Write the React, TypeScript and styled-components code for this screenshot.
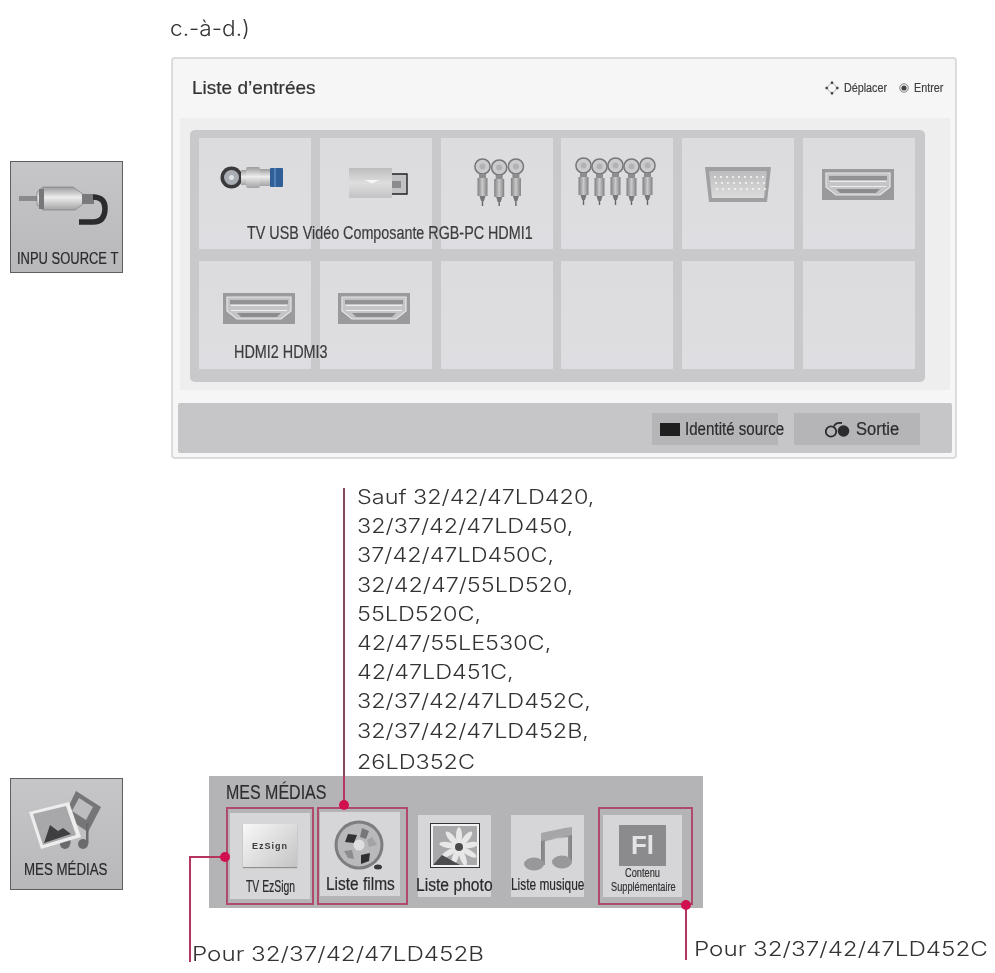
import { FC } from "react";
import styled, { createGlobalStyle } from "styled-components";

const GlobalStyle = createGlobalStyle`
  html, body {
    margin: 0;
    padding: 0;
    background: #ffffff;
  }
`;

const sans = `"Liberation Sans", Arial, sans-serif`;
const light = `Inter, "Noto Sans", sans-serif`;
const pink = "#b5355f";

const Page = styled.div`
  position: relative;
  width: 995px;
  height: 973px;
  overflow: hidden;
  background: #ffffff;
  color: #333333;
  font-family: ${sans};
  filter: blur(0.5px);
`;
// no condensed font on the box, so the TV labels are squeezed to their real width
const Squeezed = styled.span<{ $x: number; $w: number; $size: number }>`
  display: inline-block;
  flex: none;
  width: ${({ $w }) => $w}px;
  font-size: ${({ $size }) => $size}px;
  white-space: nowrap;
  -webkit-text-stroke: 0.2px currentColor;
  transform: scaleX(${({ $x }) => $x});
  transform-origin: left center;
`;
const Widened = styled.div<{ $x: number; $size: number }>`
  font-family: ${light};
  font-weight: 300;
  font-size: ${({ $size }) => $size}px;
  white-space: nowrap;
  color: #333333;
  transform: scaleX(${({ $x }) => $x});
  transform-origin: left center;
`;
const TopNote = styled.div`
  height: 57px;
  padding: 13px 0 0 170px;
  box-sizing: border-box;
  line-height: 30px;
`;
const Row = styled.div`
  display: flex;
  align-items: flex-start;
`;
const Rail = styled.div<{ $top: number }>`
  width: 171px;
  flex: none;
  box-sizing: border-box;
  padding: ${({ $top }) => $top}px 0 0 10px;
`;
const KeyTile = styled.div<{ $top: number; $bottom: number }>`
  width: 113px;
  height: 112px;
  box-sizing: border-box;
  border: 1.5px solid #5f5f61;
  background: linear-gradient(#c6c6c9, #b8b8bb);
  display: flex;
  flex-direction: column;
  align-items: center;
  justify-content: space-between;
  padding: ${({ $top }) => $top}px 0 ${({ $bottom }) => $bottom}px;
`;
const KeyLabel = styled(Squeezed)`
  line-height: 18px;
  color: #2a2a2c;
`;
const Panel = styled.div`
  width: 786px;
  height: 402px;
  box-sizing: border-box;
  border: 2px solid #dcdcdc;
  border-radius: 4px;
  background: #f6f6f7;
  display: flex;
  flex-direction: column;
`;
const PanelHeader = styled.div`
  height: 59px;
  flex: none;
  box-sizing: border-box;
  padding: 0 10px 2px 19px;
  display: flex;
  align-items: center;
  justify-content: space-between;
`;
const PanelTitle = styled(Squeezed)`
  color: #333333;
`;
const Hints = styled.div`
  display: flex;
  align-items: center;
  color: #3f3f41;
`;
const Hint = styled.span<{ $gap?: number; $iconGap: number }>`
  display: inline-flex;
  align-items: center;
  gap: ${({ $iconGap }) => $iconGap}px;
  margin-left: ${({ $gap }) => $gap ?? 0}px;
`;
const Band = styled.div`
  position: relative;
  height: 272px;
  flex: none;
  margin: 0 5px 0 7px;
  padding: 12px 0 0 10px;
  box-sizing: border-box;
  background: #eeeeef;
`;
const Sources = styled.div`
  width: 735px;
  height: 252px;
  box-sizing: border-box;
  padding: 8px 10px 13px 9px;
  background: #c9c9cc;
  border-radius: 5px;
  display: grid;
  grid-template-columns: repeat(6, 1fr);
  grid-template-rows: 111px 108px;
  column-gap: 8.8px;
  row-gap: 12px;
`;
const SourceTile = styled.div<{ $top: number; $left: number }>`
  background: linear-gradient(#dcdcde, #dedee2);
  display: flex;
  align-items: flex-start;
  padding: ${({ $top }) => $top}px 0 0 ${({ $left }) => $left}px;
  box-sizing: border-box;
`;
const SourceLabels = styled(Squeezed)<{ $left: number; $top: number }>`
  position: absolute;
  left: ${({ $left }) => $left}px;
  top: ${({ $top }) => $top}px;
  line-height: 20px;
  color: #3c3c3e;
`;
const ActionBar = styled.div`
  height: 50px;
  flex: none;
  margin: 13px 3px 0 5px;
  padding: 10px 32px 0 0;
  box-sizing: border-box;
  background: #c6c6c9;
  border-radius: 2px;
  display: flex;
  justify-content: flex-end;
  align-items: flex-start;
  gap: 16px;
`;
const ActionButton = styled.div<{ $indent: number; $gap: number }>`
  width: 126px;
  height: 32px;
  box-sizing: border-box;
  padding-left: ${({ $indent }) => $indent}px;
  background: #b5b5b7;
  display: flex;
  align-items: center;
  gap: ${({ $gap }) => $gap}px;
  color: #2c2c2e;
`;
const BlackKey = styled.span`
  width: 20px;
  height: 13px;
  flex: none;
  background: #1f1f20;
`;
const Callout = styled.div`
  display: flow-root;
  height: 288px;
  margin: 29px 0 0 343px;
  padding: 0 0 0 12px;
  border-left: 2px solid #7f4a5e;
`;
const CalloutLines = styled.div`
  margin-top: -5px;
`;
const CalloutLine = styled(Widened)`
  line-height: 29.2px;
  &:last-child {
    margin-top: 2px;
  }
`;
const MediaArea = styled.div`
  position: relative;
  width: 824px;
  height: 197px;
`;
const MediaBar = styled.div`
  width: 494px;
  height: 132px;
  margin-left: 38px;
  box-sizing: border-box;
  padding: 4px 0 0 17px;
  background: #b4b4b6;
`;
const MediaTitle = styled.div`
  height: 27px;
  line-height: 24px;
  color: #2e2e30;
`;
const MediaRow = styled.div`
  display: flex;
  align-items: flex-start;
`;
const MediaSlot = styled.div<{
  $width: number;
  $gap: number;
  $top: number;
  $left: number;
  $right: number;
  $marked?: boolean;
}>`
  width: ${({ $width }) => $width}px;
  height: 98px;
  margin-left: ${({ $gap }) => $gap}px;
  box-sizing: border-box;
  border: 2px solid ${({ $marked }) => ($marked ? "#b04a6c" : "transparent")};
  padding: ${({ $top, $left, $right }) => `${$top}px ${$right}px 0 ${$left}px`};
`;
const MediaTile = styled.div<{ $height: number; $top: number }>`
  height: ${({ $height }) => $height}px;
  box-sizing: border-box;
  padding-top: ${({ $top }) => $top}px;
  background: #d6d6d8;
  display: flex;
  flex-direction: column;
  align-items: center;
  justify-content: space-between;
`;
const MediaLabel = styled(Squeezed)`
  line-height: 20px;
  margin-bottom: 2px;
  color: #2a2a2c;
`;
const SmallLabels = styled.div`
  display: flex;
  flex-direction: column;
  align-items: center;
  margin-bottom: 4px;
`;
const SmallLabel = styled(Squeezed)`
  line-height: 13.5px;
  color: #333333;
`;
const Leader = styled.div<{ $x: number; $y: number; $w: number; $h: number }>`
  position: absolute;
  left: ${({ $x }) => $x}px;
  top: ${({ $y }) => $y}px;
  width: ${({ $w }) => $w}px;
  height: ${({ $h }) => $h}px;
  background: ${pink};
`;
const Pin = styled.div<{ $x: number; $y: number }>`
  position: absolute;
  left: ${({ $x }) => $x - 5}px;
  top: ${({ $y }) => $y - 5}px;
  width: 10px;
  height: 10px;
  border-radius: 50%;
  background: #d0104f;
`;
const FootNote = styled(Widened)<{ $left: number; $top: number }>`
  position: absolute;
  left: ${({ $left }) => $left}px;
  top: ${({ $top }) => $top}px;
  line-height: 26px;
`;
const SignSheet = styled.div`
  width: 54px;
  height: 43px;
  background: linear-gradient(135deg, #f8f8f8, #c4c4c4);
  box-shadow: 0 1px 1px #8f8f8f;
  display: flex;
  align-items: center;
  justify-content: center;
`;
const SignText = styled.span`
  font-size: 9px;
  font-weight: 700;
  letter-spacing: 1px;
  color: #3a3a3a;
`;
const FlashSquare = styled.div`
  width: 47px;
  height: 41px;
  background: #8b8b8d;
  display: flex;
  align-items: center;
  justify-content: center;
  font-weight: 700;
  font-size: 26px;
  color: #e4e4e6;
`;

const Defs: FC = () => (
  <svg width="0" height="0" style={{ position: "absolute" }}>
    <defs>
      <linearGradient id="metal" x1="0" y1="0" x2="0" y2="1">
        <stop offset="0" stopColor="#9b9b9d" />
        <stop offset="0.45" stopColor="#ededed" />
        <stop offset="1" stopColor="#a3a3a5" />
      </linearGradient>
      <linearGradient id="usb" x1="0" y1="0" x2="0" y2="1">
        <stop offset="0" stopColor="#bdbdbf" />
        <stop offset="0.5" stopColor="#dedede" />
        <stop offset="1" stopColor="#c3c3c5" />
      </linearGradient>
      <linearGradient id="metalH" x1="0" y1="0" x2="1" y2="0">
        <stop offset="0" stopColor="#808083" />
        <stop offset="0.5" stopColor="#c9c9c9" />
        <stop offset="1" stopColor="#808083" />
      </linearGradient>
      <linearGradient id="vga" x1="0" y1="0" x2="0" y2="1">
        <stop offset="0" stopColor="#bcbcbe" />
        <stop offset="1" stopColor="#dcdcdd" />
      </linearGradient>
    </defs>
  </svg>
);

const CoaxIcon: FC = () => (
  <svg width="64" height="25" viewBox="0 0 64 25">
    <circle cx="11.5" cy="12.5" r="11" fill="#3a3a3c" />
    <circle cx="11.5" cy="12.5" r="7.5" fill="#a9aeb4" />
    <circle cx="11.5" cy="12.5" r="2.5" fill="#dfe3e6" />
    <rect x="21" y="5" width="7" height="15" fill="url(#metal)" />
    <rect x="26" y="2" width="14" height="21" rx="2" fill="url(#metal)" />
    <rect x="40" y="4" width="10" height="17" fill="url(#metal)" />
    <rect x="50" y="3" width="13" height="19" rx="1" fill="#2f5f96" />
    <rect x="54" y="3" width="2" height="19" fill="#4f7fb4" />
  </svg>
);

const UsbIcon: FC = () => (
  <svg width="60" height="30" viewBox="0 0 60 30">
    <rect x="0" y="0" width="43" height="30" fill="url(#usb)" />
    <path d="M16 12h14l-7 3.5z" fill="#f7f7f7" />
    <path d="M43 6h15v20H43" fill="#c2c2c4" stroke="#222222" strokeWidth="1.4" />
    <rect x="43" y="13" width="9" height="7" fill="#8b8b8d" />
  </svg>
);

const RcaPlugs: FC<{ count: number; pitch: number; width: number }> = ({ count, pitch, width }) => (
  <svg width={width} height="48" viewBox={`0 0 ${width} 48`}>
    {Array.from({ length: count }, (_, i) => (
      <g key={i} transform={`translate(${i * pitch} ${i % 2 ? 1 : 0})`}>
        <circle cx="8.5" cy="8.5" r="7.6" fill="#cbcbcd" stroke="#77777a" strokeWidth="1.5" />
        <circle cx="8.5" cy="8.5" r="3" fill="#b2b2b4" />
        <rect x="5" y="16" width="7" height="7" fill="#8d8d8f" />
        <rect x="3.5" y="20" width="10" height="18" fill="url(#metalH)" />
        <path d="M5.5 38h6l-1.5 5h-3z" fill="#77777a" />
        <rect x="7.8" y="43" width="1.4" height="5" fill="#666668" />
      </g>
    ))}
  </svg>
);

const VgaIcon: FC = () => (
  <svg width="66" height="35" viewBox="0 0 66 35">
    <path d="M0 0h66l-4 35H4z" fill="#a0a0a2" />
    <path d="M4 4h58l-3 27H7z" fill="url(#vga)" />
    {[0, 1, 2].map((r) =>
      Array.from({ length: 9 }, (_, c) => (
        <circle key={`${r}-${c}`} cx={10 + c * 6 + r} cy={10 + r * 6} r="1.1" fill="#f4f4f4" />
      ))
    )}
  </svg>
);

const HdmiIcon: FC = () => (
  <svg width="72" height="31" viewBox="0 0 72 31">
    <rect width="72" height="31" fill="#9a9a9c" />
    <path d="M4 4h64v14l-10 8H14L4 18z" fill="#c4c4c6" stroke="#e6e6e6" strokeWidth="1.2" />
    <rect x="7" y="7" width="58" height="4" fill="#929294" />
    <rect x="8" y="12" width="56" height="1" fill="#eeeeee" />
    <rect x="8" y="17" width="56" height="1" fill="#eeeeee" />
    <path d="M14 20h44l-4 4H18z" fill="#8c8c8e" />
  </svg>
);

const MoveIcon: FC = () => (
  <svg width="14" height="14" viewBox="0 0 14 14">
    <circle cx="7" cy="7" r="4.4" fill="none" stroke="#a8a8a8" strokeWidth="0.8" />
    <rect x="5.8" y="0.5" width="2.4" height="2.4" fill="#444444" />
    <rect x="5.8" y="11.1" width="2.4" height="2.4" fill="#444444" />
    <rect x="0.5" y="5.8" width="2.4" height="2.4" fill="#444444" />
    <rect x="11.1" y="5.8" width="2.4" height="2.4" fill="#444444" />
  </svg>
);

const EnterIcon: FC = () => (
  <svg width="10" height="10" viewBox="0 0 10 10">
    <circle cx="5" cy="5" r="4.2" fill="none" stroke="#666666" strokeWidth="0.8" />
    <circle cx="5" cy="5" r="2.6" fill="#444444" />
  </svg>
);

const ExitIcon: FC = () => (
  <svg width="26" height="17" viewBox="0 0 26 17">
    <circle cx="7" cy="10.5" r="5.2" fill="none" stroke="#2c2c2e" strokeWidth="1.8" />
    <path d="M10 5.5C11 2 14 1.5 18 2" fill="none" stroke="#2c2c2e" strokeWidth="1.8" />
    <circle cx="19.5" cy="10" r="5.8" fill="#2c2c2e" />
  </svg>
);

const PlugKeyIcon: FC = () => (
  <svg width="96" height="40" viewBox="0 0 96 40">
    <rect x="0" y="10" width="18" height="5" fill="#8a8a8c" />
    <path d="M18 6l6-5h30l10 7v10l-8 6H24l-6-5z" fill="url(#metal)" stroke="#77777a" strokeWidth="0.6" />
    <rect x="20" y="3" width="5" height="20" fill="#77777a" />
    <rect x="63" y="8" width="12" height="10" fill="#7a7a7c" />
    <path d="M74 11c8 0 12 4 12 11 0 9-4 14-12 14H60" fill="none" stroke="#2b2b2d" strokeWidth="5.5" />
  </svg>
);

const MediaKeyIcon: FC = () => (
  <svg width="76" height="60" viewBox="0 0 76 60">
    <path d="M47 0l25 16-13 25-24-16z" fill="#767678" />
    <path d="M50 7l14 9-7 13-14-9z" fill="#bdbdbf" />
    <circle cx="36" cy="53" r="5" fill="#6b6b6d" />
    <circle cx="54" cy="53" r="5" fill="#6b6b6d" />
    <rect x="39" y="32" width="2.5" height="21" fill="#6b6b6d" />
    <rect x="57" y="32" width="2.5" height="21" fill="#6b6b6d" />
    <path d="M0 21l40-10 12 35-40 12z" fill="#ededed" />
    <path d="M4 23l33-8 10 29-33 10z" fill="#a8a8aa" />
    <path d="M15 52l6-18 8 6 5-3 8 6z" fill="#3f3f41" />
  </svg>
);

const ReelIcon: FC = () => (
  <svg width="52" height="52" viewBox="0 0 52 52">
    <circle cx="25" cy="25" r="24.5" fill="#7d7d7f" />
    <circle cx="25" cy="25" r="21.5" fill="#b9b9bb" />
    <path d="M14 14l9 1-3 8-9-1z" fill="#333335" />
    <path d="M28 8l7 3-3 8-6-2z" fill="#77777a" />
    <path d="M38 17l5 8-8 2-2-7z" fill="#a3a3a5" />
    <path d="M27 35l9-2-1 8-8 3z" fill="#2e2e30" />
    <path d="M10 31l8-1 2 9-6-1z" fill="#8c8c8e" />
    <circle cx="25" cy="25" r="5.5" fill="#dedee0" />
    <ellipse cx="44" cy="47" rx="4" ry="2.5" fill="#3a3a3c" />
  </svg>
);

const PhotoIcon: FC = () => (
  <svg width="50" height="45" viewBox="0 0 50 45">
    <rect x="0.5" y="0.5" width="49" height="44" fill="#f3f3f3" stroke="#333333" strokeWidth="1" />
    <rect x="3" y="3" width="44" height="39" fill="#a9a9ab" />
    <g fill="#e7e7e8">
      {[0, 40, 80, 120, 160, 200, 240, 280, 320].map((a) => (
        <ellipse key={a} cx="29" cy="13" rx="3" ry="9" transform={`rotate(${a} 29 24)`} />
      ))}
    </g>
    <circle cx="29" cy="24" r="4" fill="#4a4a4c" />
    <path d="M3 42l9-10 9 5 9 5z" fill="#4c4c4e" />
  </svg>
);

const NoteIcon: FC = () => (
  <svg width="48" height="44" viewBox="0 0 48 44">
    <path d="M17 8L48 2v33h-4V10L21 14v24h-4z" fill="url(#metalH)" />
    <path d="M17 6C28 4 38 1 48 0v8L17 14z" fill="#a6a6a8" />
    <ellipse cx="10" cy="37" rx="10" ry="6.5" fill="#98989a" />
    <ellipse cx="38" cy="35" rx="10" ry="6.5" fill="#98989a" />
  </svg>
);

const sourceTiles = [
  { top: 27, left: 21, icon: <CoaxIcon /> },
  { top: 30, left: 29, icon: <UsbIcon /> },
  { top: 20, left: 33, icon: <RcaPlugs count={3} pitch={16.7} width={52} /> },
  { top: 19, left: 14, icon: <RcaPlugs count={5} pitch={16} width={82} /> },
  { top: 29, left: 23, icon: <VgaIcon /> },
  { top: 31, left: 19, icon: <HdmiIcon /> },
  { top: 32, left: 24, icon: <HdmiIcon /> },
  { top: 32, left: 18, icon: <HdmiIcon /> },
  { top: 0, left: 0 },
  { top: 0, left: 0 },
  { top: 0, left: 0 },
  { top: 0, left: 0 },
];

const calloutLines = [
  "Sauf 32/42/47LD420,",
  "32/37/42/47LD450,",
  "37/42/47LD450C,",
  "32/42/47/55LD520,",
  "55LD520C,",
  "42/47/55LE530C,",
  "42/47LD451C,",
  "32/37/42/47LD452C,",
  "32/37/42/47LD452B,",
  "26LD352C",
];

export default function App() {
  return (
    <Page>
      <GlobalStyle />
      <Defs />
      <TopNote>
        <Widened $x={1.03} $size={22}>
          c.-à-d.)
        </Widened>
      </TopNote>
      <Row>
        <Rail $top={104}>
          <KeyTile $top={24} $bottom={4}>
            <PlugKeyIcon />
            <KeyLabel $x={0.81} $w={100} $size={16}>
              INPU SOURCE T
            </KeyLabel>
          </KeyTile>
        </Rail>
        <Panel>
          <PanelHeader>
            <PanelTitle $x={1} $w={123} $size={19}>
              Liste d’entrées
            </PanelTitle>
            <Hints>
              <Hint $iconGap={5}>
                <MoveIcon />
                <Squeezed $x={0.86} $w={46} $size={12.5}>
                  Déplacer
                </Squeezed>
              </Hint>
              <Hint $gap={9} $iconGap={5}>
                <EnterIcon />
                <Squeezed $x={0.86} $w={31} $size={12.5}>
                  Entrer
                </Squeezed>
              </Hint>
            </Hints>
          </PanelHeader>
          <Band>
            <Sources>
              {sourceTiles.map((tile, i) => (
                <SourceTile key={i} $top={tile.top} $left={tile.left}>
                  {tile.icon}
                </SourceTile>
              ))}
            </Sources>
            <SourceLabels $x={0.796} $w={285} $size={18} $left={67} $top={105}>
              TV USB Vidéo Composante RGB-PC HDMI1
            </SourceLabels>
            <SourceLabels $x={0.8} $w={94} $size={18} $left={54} $top={224}>
              HDMI2 HDMI3
            </SourceLabels>
          </Band>
          <ActionBar>
            <ActionButton $indent={8} $gap={5}>
              <BlackKey />
              <Squeezed $x={0.84} $w={99} $size={18}>
                Identité source
              </Squeezed>
            </ActionButton>
            <ActionButton $indent={30} $gap={6}>
              <ExitIcon />
              <Squeezed $x={0.92} $w={43} $size={18}>
                Sortie
              </Squeezed>
            </ActionButton>
          </ActionBar>
        </Panel>
      </Row>
      <Callout>
        <CalloutLines>
          {calloutLines.map((line) => (
            <CalloutLine key={line} $x={1.2} $size={19.5}>
              {line}
            </CalloutLine>
          ))}
        </CalloutLines>
      </Callout>
      <Row>
        <Rail $top={2}>
          <KeyTile $top={12} $bottom={10}>
            <MediaKeyIcon />
            <KeyLabel $x={0.83} $w={85} $size={16}>
              MES MÉDIAS
            </KeyLabel>
          </KeyTile>
        </Rail>
        <MediaArea>
          <MediaBar>
            <MediaTitle>
              <Squeezed $x={0.8} $w={101} $size={20}>
                MES MÉDIAS
              </Squeezed>
            </MediaTitle>
            <MediaRow>
              <MediaSlot $width={88} $gap={0} $top={4} $left={2} $right={2} $marked>
                <MediaTile $height={86} $top={11}>
                  <SignSheet>
                    <SignText>EzSign</SignText>
                  </SignSheet>
                  <MediaLabel $x={0.61} $w={49} $size={17}>
                    TV EzSign
                  </MediaLabel>
                </MediaTile>
              </MediaSlot>
              <MediaSlot $width={91} $gap={3} $top={3} $left={1} $right={6} $marked>
                <MediaTile $height={84} $top={8}>
                  <ReelIcon />
                  <MediaLabel $x={0.86} $w={69} $size={18}>
                    Liste films
                  </MediaLabel>
                </MediaTile>
              </MediaSlot>
              <MediaSlot $width={77} $gap={8} $top={6} $left={0} $right={0}>
                <MediaTile $height={82} $top={8}>
                  <PhotoIcon />
                  <MediaLabel $x={0.87} $w={77} $size={18}>
                    Liste photo
                  </MediaLabel>
                </MediaTile>
              </MediaSlot>
              <MediaSlot $width={77} $gap={16} $top={6} $left={0} $right={0}>
                <MediaTile $height={82} $top={12}>
                  <NoteIcon />
                  <MediaLabel $x={0.7} $w={74} $size={17}>
                    Liste musique
                  </MediaLabel>
                </MediaTile>
              </MediaSlot>
              <MediaSlot $width={95} $gap={12} $top={6} $left={3} $right={9} $marked>
                <MediaTile $height={82} $top={10}>
                  <FlashSquare>Fl</FlashSquare>
                  <SmallLabels>
                    <SmallLabel $x={0.71} $w={36} $size={13}>
                      Contenu
                    </SmallLabel>
                    <SmallLabel $x={0.71} $w={64} $size={13}>
                      Supplémentaire
                    </SmallLabel>
                  </SmallLabels>
                </MediaTile>
              </MediaSlot>
            </MediaRow>
          </MediaBar>
          <Leader $x={172} $y={0} $w={2} $h={29} />
          <Pin $x={173} $y={29} />
          <Leader $x={19} $y={80} $w={36} $h={2} />
          <Leader $x={18} $y={80} $w={2} $h={106} />
          <Pin $x={54} $y={81} />
          <Leader $x={514} $y={129} $w={2} $h={55} />
          <Pin $x={515} $y={129} />
          <FootNote $x={1.24} $size={19.5} $left={21} $top={165}>
            Pour 32/37/42/47LD452B
          </FootNote>
          <FootNote $x={1.24} $size={19.5} $left={523} $top={160}>
            Pour 32/37/42/47LD452C
          </FootNote>
        </MediaArea>
      </Row>
    </Page>
  );
}
